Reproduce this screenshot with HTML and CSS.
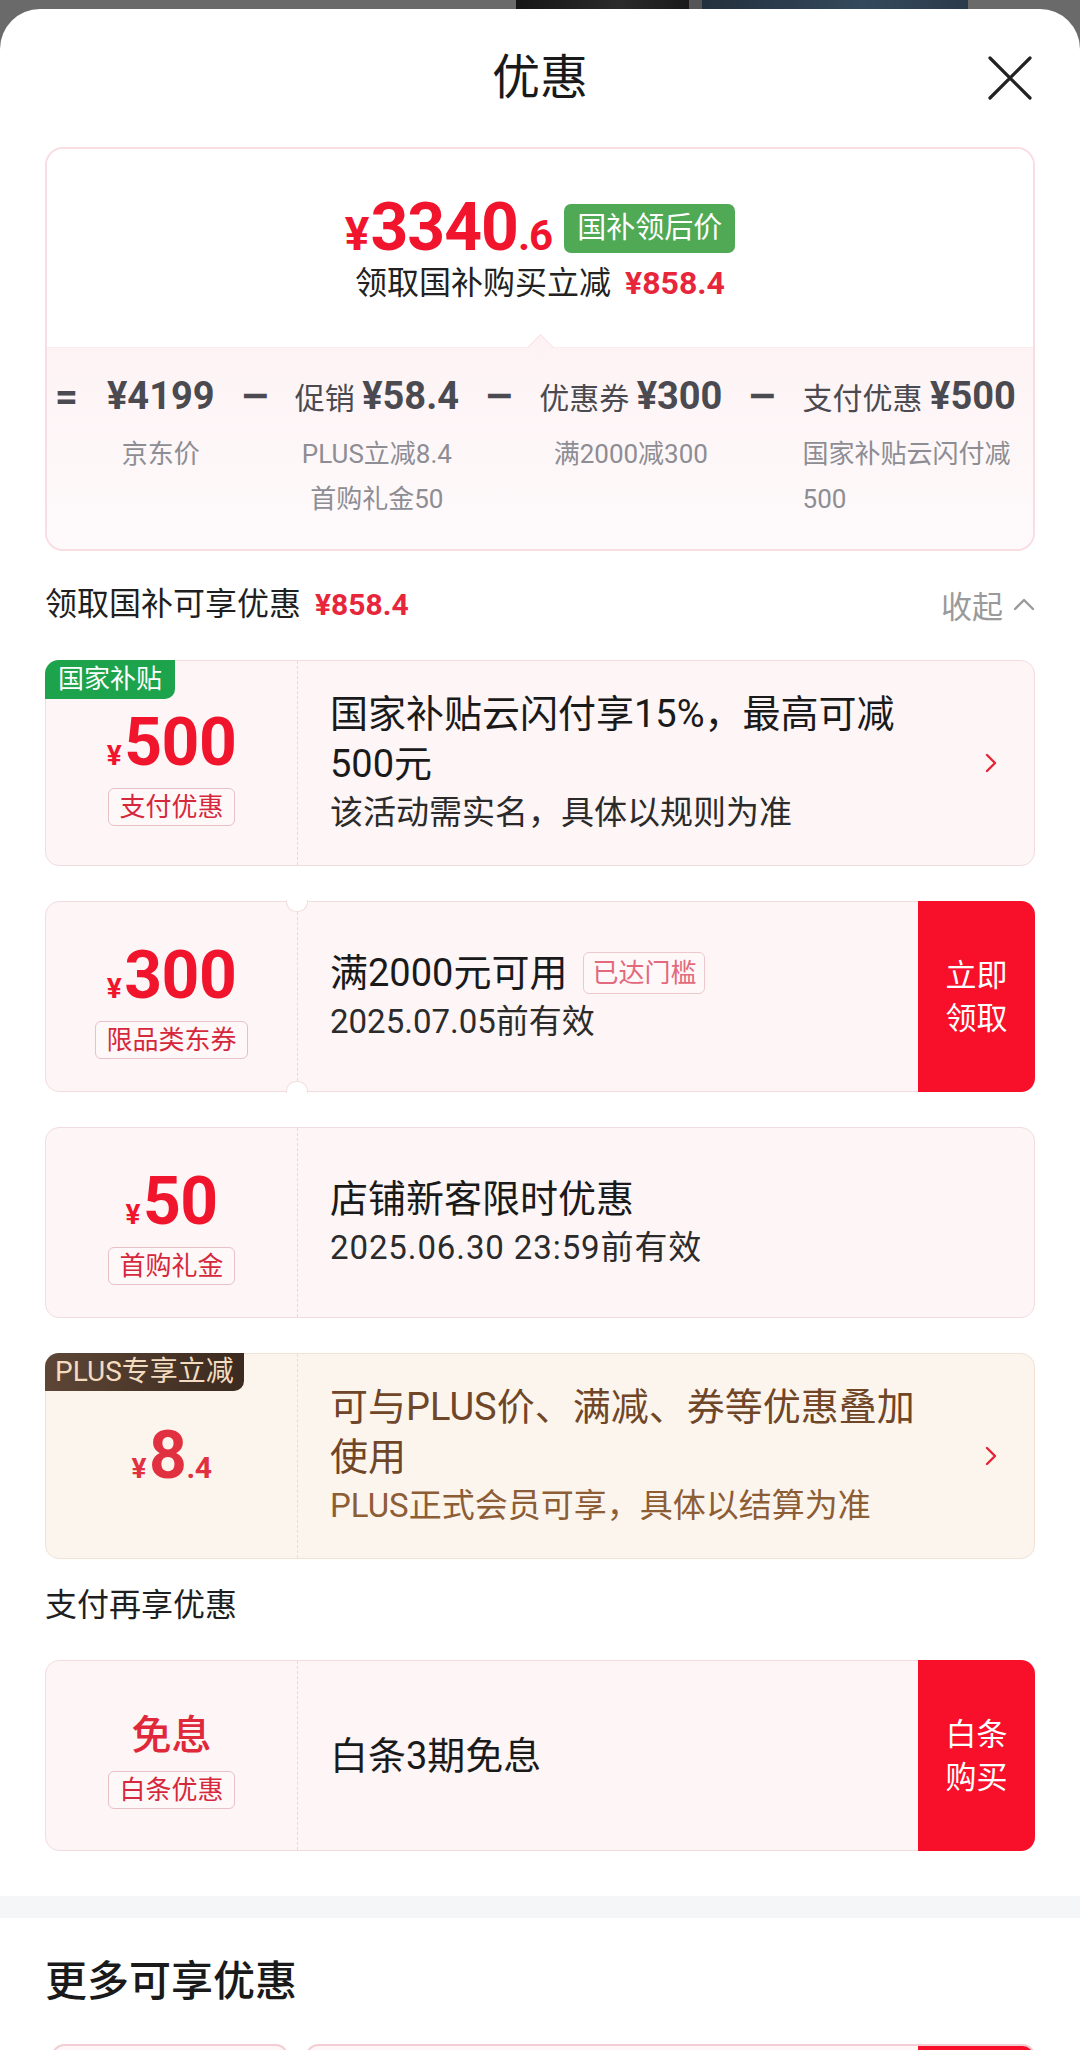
FILE: index.html
```html
<!DOCTYPE html>
<html lang="zh-CN">
<head>
<meta charset="utf-8">
<title>优惠</title>
<link rel="stylesheet" href="styles.css">
</head>
<body>
<div class="backdrop"><span class="bd-a"></span><span class="bd-gap"></span><span class="bd-b"></span></div>
<div class="sheet">
  <header class="sheet-head">
    <span class="head-spacer"></span>
    <h1 class="sheet-title">优惠</h1>
    <button class="close" aria-label="关闭">
      <svg width="46" height="44" viewBox="0 0 46 44"><path d="M3 2L43 42M43 2L3 42" stroke="#222" stroke-width="3.2" stroke-linecap="round" fill="none"/></svg>
    </button>
  </header>

  <main class="content">
    <section class="summary">
      <div class="summary-top">
        <div class="final-row">
          <span class="final-price"><span class="yen">¥</span>3340<span class="dec">.6</span></span>
          <span class="badge-green">国补领后价</span>
        </div>
        <div class="saved">领取国补购买立减<span class="saved-amt">¥858.4</span></div>
      </div>
      <div class="summary-bottom">
        <span class="op">=</span>
        <div class="col"><div class="col-h"><b>¥4199</b></div><div class="col-s">京东价</div></div>
        <span class="op op-minus">−</span>
        <div class="col"><div class="col-h">促销 <b>¥58.4</b></div><div class="col-s">PLUS立减8.4<br>首购礼金50</div></div>
        <span class="op op-minus">−</span>
        <div class="col"><div class="col-h">优惠券 <b>¥300</b></div><div class="col-s">满2000减300</div></div>
        <span class="op op-minus">−</span>
        <div class="col col-last"><div class="col-h">支付优惠 <b>¥500</b></div><div class="col-s">国家补贴云闪付减500</div></div>
      </div>
    </section>

    <div class="sec-head">
      <div class="sec-title">领取国补可享优惠<span class="sec-amt">¥858.4</span></div>
      <div class="collapse">收起<svg width="22" height="14" viewBox="0 0 22 14"><polyline points="2,12 11,3 20,12" fill="none" stroke="#9a9a9a" stroke-width="2.4" stroke-linecap="round" stroke-linejoin="round"/></svg></div>
    </div>

    <div class="card-list">
      <div class="card">
        <span class="corner-badge corner-green">国家补贴</span>
        <div class="card-left">
          <div class="amt"><span class="amt-y">¥</span>500</div>
          <span class="tag">支付优惠</span>
        </div>
        <div class="card-main">
          <p class="card-title">国家补贴云闪付享15%，最高可减<br>500元</p>
          <p class="card-sub">该活动需实名，具体以规则为准</p>
        </div>
        <svg class="card-arrow" width="12" height="20" viewBox="0 0 12 20"><polyline points="2,2 10,10 2,18" fill="none" stroke="#e62434" stroke-width="2.4" stroke-linecap="round" stroke-linejoin="round"/></svg>
      </div>

      <div class="card card-notched">
        <div class="card-left">
          <div class="amt"><span class="amt-y">¥</span>300</div>
          <span class="tag">限品类东券</span>
        </div>
        <div class="card-main">
          <p class="card-title">满2000元可用<span class="tag tag-soft">已达门槛</span></p>
          <p class="card-sub">2025.07.05前有效</p>
        </div>
        <div class="card-btn">立即<br>领取</div>
      </div>

      <div class="card">
        <div class="card-left">
          <div class="amt"><span class="amt-y">¥</span>50</div>
          <span class="tag">首购礼金</span>
        </div>
        <div class="card-main">
          <p class="card-title">店铺新客限时优惠</p>
          <p class="card-sub card-sub-wide">2025.06.30 23:59前有效</p>
        </div>
      </div>

      <div class="card card-plus">
        <span class="corner-badge corner-plus">PLUS专享立减</span>
        <div class="card-left">
          <div class="amt amt-plus"><span class="amt-y">¥</span>8<span class="amt-dec">.4</span></div>
        </div>
        <div class="card-main">
          <p class="card-title">可与PLUS价、满减、券等优惠叠加<br>使用</p>
          <p class="card-sub">PLUS正式会员可享，具体以结算为准</p>
        </div>
        <svg class="card-arrow" width="12" height="20" viewBox="0 0 12 20"><polyline points="2,2 10,10 2,18" fill="none" stroke="#e62434" stroke-width="2.4" stroke-linecap="round" stroke-linejoin="round"/></svg>
      </div>
    </div>

    <div class="sec-head sec-head-pay">
      <div class="sec-title">支付再享优惠</div>
    </div>

    <div class="card">
      <div class="card-left">
        <div class="amt-text">免息</div>
        <span class="tag">白条优惠</span>
      </div>
      <div class="card-main">
        <p class="card-title">白条3期免息</p>
      </div>
      <div class="card-btn">白条<br>购买</div>
    </div>
  </main>

  <div class="divider"></div>

  <section class="more">
    <h2 class="more-title">更多可享优惠</h2>
    <div class="more-card">
      <div class="more-left"></div>
      <div class="more-main"><span class="more-btn"></span></div>
    </div>
  </section>
</div>
</body>
</html>
```

FILE: styles.css
```css
* { box-sizing: border-box; margin: 0; padding: 0; }

html, body {
  width: 1080px;
  height: 2050px;
  overflow: hidden;
}

body {
  background: #6a6a6a;
  font-family: "Roboto", "Noto Sans CJK SC", sans-serif;
  color: #1a1a1a;
}

/* backdrop strip peeking above the sheet */
.backdrop {
  height: 9px;
  display: flex;
  padding-left: 516px;
}
.bd-a { width: 173px; background: linear-gradient(90deg, #161616, #2b2b2b 60%, #1a1a1a); }
.bd-gap { width: 13px; background: #555; }
.bd-b { width: 266px; background: linear-gradient(90deg, #23303d, #34495c 60%, #2b3b4b); }

.sheet {
  background: #fff;
  border-radius: 40px 40px 0 0;
  min-height: 2041px;
}

/* header */
.sheet-head {
  height: 138px;
  display: grid;
  grid-template-columns: 1fr auto 1fr;
  align-items: center;
}
.sheet-title {
  font-size: 48px;
  font-weight: 400;
  color: #1a1a1a;
  line-height: 1;
}
.close {
  justify-self: end;
  margin-right: 47px;
  border: 0;
  background: none;
  display: flex;
}

.content { padding: 0 45px; }

/* summary card */
.summary {
  border: 2px solid #f9dde3;
  border-radius: 18px;
  overflow: hidden;
}
.summary-top {
  padding: 49px 0 44px;
  display: flex;
  flex-direction: column;
  align-items: center;
  background: #fff;
}
.final-row {
  display: flex;
  align-items: center;
  height: 60px;
}
.final-price {
  color: #f0152c;
  font-weight: 700;
  font-size: 66px;
  line-height: 60px;
  letter-spacing: -1px;
}
.final-price .yen { font-size: 46px; line-height: 1; margin-right: 2px; }
.final-price .dec { font-size: 42px; line-height: 1; }
.badge-green {
  margin-left: 12px;
  height: 49px;
  line-height: 49px;
  padding: 0 13px;
  background: #4fa955;
  color: #fff;
  font-size: 29px;
  border-radius: 7px;
}
.saved {
  margin-top: 5px;
  height: 40px;
  font-size: 32px;
  line-height: 40px;
  color: #222;
}
.saved-amt {
  margin-left: 14px;
  color: #e8263b;
  font-weight: 700;
}

.summary-bottom {
  position: relative;
  border-top: 1px solid #fbecef;
  background: linear-gradient(180deg, #fdf3f5, #fefafb);
  padding: 29px 0 27px 8px;
  display: flex;
  align-items: flex-start;
  gap: 29px;
}
.summary-bottom::before {
  content: "";
  position: absolute;
  top: -10px;
  left: 50%;
  width: 18px;
  height: 18px;
  margin-left: -9px;
  transform: rotate(45deg);
  background: #fdf3f5;
  border-top: 1px solid #f8e3e7;
  border-left: 1px solid #f8e3e7;
}
.op {
  height: 40px;
  font-size: 40px;
  font-weight: 700;
  line-height: 40px;
  color: #4a4a50;
}
.op-minus {
  display: inline-block;
  transform: scaleX(1.35);
}
.col { display: flex; flex-direction: column; align-items: center; }
.col-h {
  height: 40px;
  white-space: nowrap;
  font-size: 30px;
  line-height: 40px;
  color: #4a4a50;
}
.col-h b { font-size: 38px; font-weight: 700; line-height: 1; }
.col-s {
  contain: inline-size;
  width: 100%;
  margin-top: 15px;
  font-size: 26px;
  line-height: 45px;
  color: #8d8d93;
  text-align: center;
}
.col-last .col-s { text-align: left; }

/* section heads */
.sec-head {
  height: 40px;
  margin: 33px 0 36px;
  display: flex;
  align-items: center;
  justify-content: space-between;
}
.sec-head-pay { margin: 26px 0 35px; }
.sec-title {
  font-size: 32px;
  line-height: 40px;
  color: #1f1f1f;
}
.sec-amt {
  margin-left: 14px;
  color: #e8263b;
  font-weight: 700;
  font-size: 30px;
  line-height: 1;
}
.collapse {
  display: flex;
  align-items: center;
  gap: 10px;
  font-size: 31px;
  color: #9a9a9a;
}

/* coupon cards */
.card-list {
  display: flex;
  flex-direction: column;
  gap: 35px;
}
.card {
  position: relative;
  display: flex;
  min-height: 191px;
  border: 1px solid #f1dde0;
  border-radius: 14px;
  background: #fdf5f6;
}
.card-left {
  position: relative;
  width: 252px;
  flex: none;
  padding-top: 12px;
  display: flex;
  flex-direction: column;
  align-items: center;
  justify-content: center;
  border-right: 1px dashed #ecd6da;
}
.amt {
  color: #f0152c;
  font-weight: 700;
  font-size: 66px;
  line-height: 60px;
  letter-spacing: -0.5px;
}
.amt-y { font-size: 28px; line-height: 1; margin-right: 3px; }
.amt-dec { font-size: 30px; line-height: 1; }
.amt-plus { color: #e1303f; }
.amt-text {
  color: #e0283b;
  font-size: 40px;
  font-weight: 500;
  line-height: 44px;
}
.amt-text + .tag { margin-top: 13px; }
.tag {
  display: inline-block;
  margin-top: 15px;
  height: 38px;
  line-height: 36px;
  padding: 0 10px;
  border: 1px solid #e8c0c5;
  border-radius: 6px;
  background: #fff8f9;
  font-size: 26px;
  color: #d6283c;
}
.tag-soft {
  margin: 4px 0 0 16px;
  height: 42px;
  line-height: 40px;
  padding: 0 8px;
  vertical-align: top;
  border-color: #edc8cd;
  color: #e3697c;
}
.card-main {
  flex: 1;
  padding: 28px 0 28px 32px;
  display: flex;
  flex-direction: column;
  justify-content: center;
}
.card-title {
  font-size: 38px;
  line-height: 50px;
  color: #1a1a1a;
}
.card-sub {
  font-size: 33px;
  line-height: 48px;
  color: #2b2b2b;
}
.card-sub-wide { letter-spacing: 0.9px; }
.card-arrow {
  align-self: center;
  flex: none;
  margin: 0 37px 0 12px;
}
.card-btn {
  flex: none;
  width: 117px;
  margin: -1px -1px -1px 0;
  border-radius: 0 14px 14px 0;
  background: #f8102a;
  color: #fff;
  font-size: 31px;
  line-height: 43px;
  display: flex;
  align-items: center;
  justify-content: center;
  text-align: center;
}
.corner-badge {
  position: absolute;
  top: -1px;
  left: -1px;
  z-index: 1;
  height: 39px;
  line-height: 39px;
  padding: 0 13px;
  font-size: 26px;
  border-radius: 14px 0 10px 0;
}
.corner-green { background: #1ca34b; color: #fff; }
.corner-plus {
  height: 38px;
  line-height: 38px;
  padding: 0 10px;
  background: linear-gradient(90deg, #5d4636, #3b2a1f);
  color: #f4dcc0;
  font-size: 28px;
}

/* notched coupon */
.card-notched .card-left::before,
.card-notched .card-left::after {
  content: "";
  position: absolute;
  right: -11px;
  width: 20px;
  height: 11px;
  background: #fff;
  border: 1px solid #f1dde0;
}
.card-notched .card-left::before {
  top: -2px;
  border-top: none;
  border-radius: 0 0 10px 10px;
}
.card-notched .card-left::after {
  bottom: -2px;
  border-bottom: none;
  border-radius: 10px 10px 0 0;
}

/* PLUS card */
.card-plus {
  background: #fcf5ee;
  border-color: #f0e3d5;
}
.card-plus .card-left { border-right-color: #eddccb; padding-top: 0; }
.card-plus .card-title { color: #6f4627; }
.card-plus .card-sub { color: #8d5d36; }

/* divider + more */
.divider {
  margin-top: 45px;
  height: 22px;
  background: #f5f6f8;
}
.more { padding: 0 45px; }
.more-title {
  margin-top: 39px;
  height: 50px;
  line-height: 50px;
  font-size: 42px;
  font-weight: 500;
  color: #1a1a1a;
}
.more-card {
  margin-top: 37px;
  display: flex;
  gap: 18px;
  padding-left: 7px;
}
.more-left {
  width: 236px;
  height: 80px;
  border: 2px solid #f3cdd3;
  border-radius: 12px;
  background: #fff6f7;
}
.more-main {
  flex: 1;
  height: 80px;
  display: flex;
  justify-content: flex-end;
  border: 2px solid #f3cdd3;
  border-radius: 12px;
  background: #fff6f7;
  overflow: hidden;
}
.more-btn { width: 115px; background: #f8102a; }
```
